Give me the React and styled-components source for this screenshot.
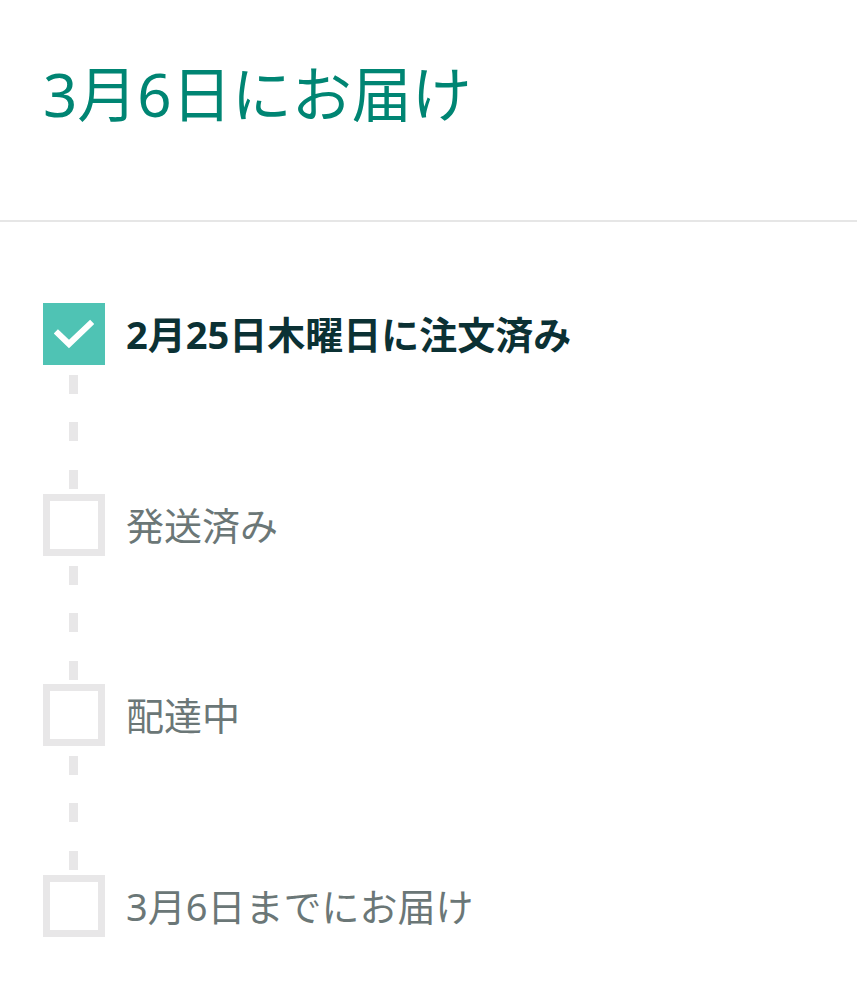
import styled, { createGlobalStyle } from 'styled-components';

const GlobalStyle = createGlobalStyle`
  body {
    margin: 0;
    background: #ffffff;
    font-family: "Noto Sans", "Noto Sans CJK JP", sans-serif;
  }
`;

const steps = [
  { label: '2月25日木曜日に注文済み', done: true },
  { label: '発送済み', done: false },
  { label: '配達中', done: false },
  { label: '3月6日までにお届け', done: false },
];

const Header = styled.header`
  padding: 58px 0 90px 43px;
  border-bottom: 2px solid #e6e6e6;
`;

const Title = styled.h1`
  margin: 0;
  font-size: 60px;
  line-height: 72px;
  font-weight: 400;
  color: #008573;
`;

const Timeline = styled.ol`
  list-style: none;
  margin: 0;
  padding: 81px 0 0 43px;
`;

const Step = styled.li`
  display: flex;
  flex-direction: column;
`;

const Row = styled.div`
  display: flex;
  align-items: center;
  gap: 21px;
`;

const Box = styled.span`
  flex: none;
  box-sizing: border-box;
  width: 62px;
  height: 62px;
  display: flex;
  align-items: center;
  justify-content: center;
  background: ${p => (p.$done ? '#4fc3b4' : '#ffffff')};
  border: ${p => (p.$done ? 'none' : '7px solid #e8e7e8')};
`;

const Label = styled.span`
  font-size: 38px;
  line-height: 46px;
  font-weight: ${p => (p.$done ? 700 : 400)};
  color: ${p => (p.$done ? '#0b3134' : '#6b7777')};
`;

const Rail = styled.div`
  width: 9px;
  height: 114px;
  margin: 10px 0 4.5px 26px;
  background: repeating-linear-gradient(
    to bottom,
    #e8e7e8 0,
    #e8e7e8 19px,
    transparent 19px,
    transparent 47.5px
  );
`;

const Check = () => (
  <svg width="40" height="30" viewBox="0 0 40 30" fill="none">
    <path
      d="M4 14.5 L15 25 L36 5"
      stroke="#ffffff"
      strokeWidth="6"
      strokeLinecap="square"
      strokeLinejoin="miter"
    />
  </svg>
);

export default function App() {
  return (
    <>
      <GlobalStyle />
      <Header>
        <Title>3月6日にお届け</Title>
      </Header>
      <Timeline>
        {steps.map((step, i) => (
          <Step key={step.label}>
            <Row>
              <Box $done={step.done}>{step.done && <Check />}</Box>
              <Label $done={step.done}>{step.label}</Label>
            </Row>
            {i < steps.length - 1 && <Rail />}
          </Step>
        ))}
      </Timeline>
    </>
  );
}
